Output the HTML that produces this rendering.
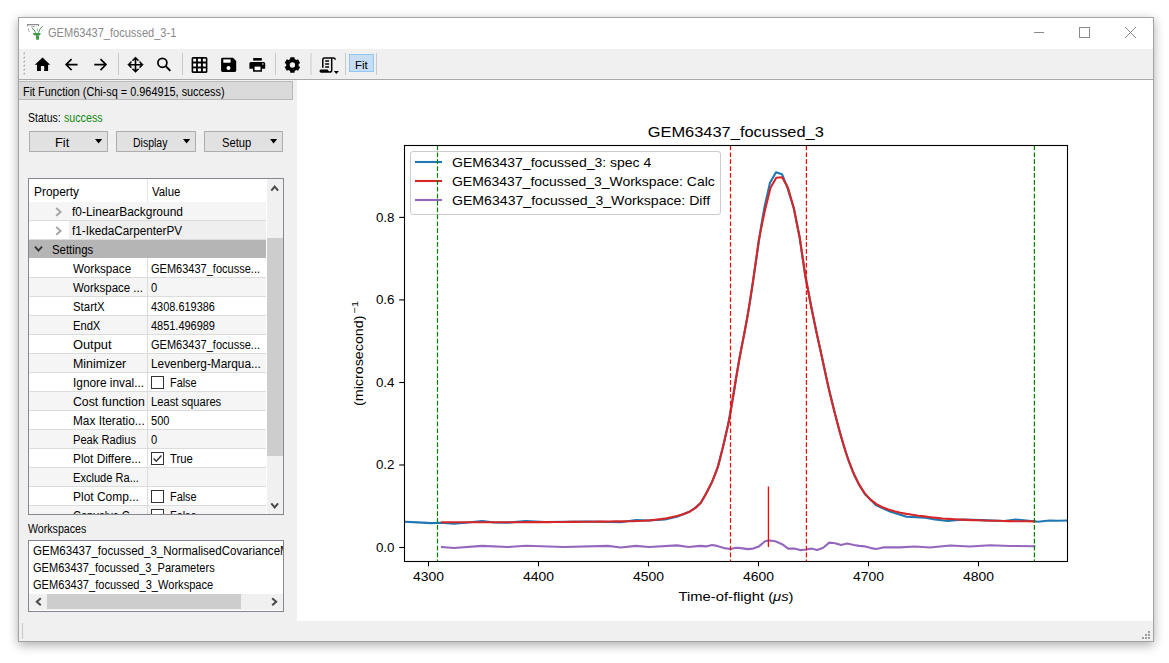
<!DOCTYPE html>
<html><head><meta charset="utf-8">
<style>
*{box-sizing:border-box;margin:0;padding:0}
html,body{width:1169px;height:663px;overflow:hidden;background:#fff;font-family:"Liberation Sans",sans-serif;font-size:12px;color:#000}
.a{position:absolute}
#win{left:18px;top:17px;width:1136px;height:625px;border:1px solid #a3a3a3;background:#f0f0f0;box-shadow:0 3px 10px rgba(0,0,0,0.33)}
.t{position:absolute;white-space:nowrap;line-height:1}
</style></head><body>
<div id="win" class="a"></div>
<!-- title bar -->
<div class="a" style="left:19px;top:18px;width:1134px;height:31px;background:#fff"></div>
<svg class="a" style="left:25px;top:22px" width="20" height="20" viewBox="25 22 20 20">
<path d="M27.6 26.2 V24.6 H38.6 V26.2" fill="none" stroke="#8c8c8c" stroke-width="1.1"/>
<path d="M31.2 26.7 H34.6" stroke="#8c8c8c" stroke-width="0.9"/>
<path d="M29.2 26.7 V27.1 M36.4 26.7 V27.1" stroke="#9a9a9a" stroke-width="0.8"/>
<path d="M28.6 28.4 V30.6 Q28.6 31.6 29.6 31.6" fill="none" stroke="#a8a8a8" stroke-width="1.0"/>
<path d="M37.3 28.2 V31.2" stroke="#b0b0b0" stroke-width="0.9"/>
<path d="M31.8 28.4 Q34.5 28.8 35.6 32.8" fill="none" stroke="#3d9b4a" stroke-width="1.0"/>
<path d="M38.4 32.8 Q39.6 28 42.8 26.2" fill="none" stroke="#3d9b4a" stroke-width="1.0"/>
<path d="M33.1 33 H40.7 Q40.7 35.8 37.4 35.8 H36.6 Q33.1 35.8 33.1 33 Z" fill="#3d9b4a"/>
<path d="M36 35.5 H39.1 L38.9 39.8 H36.2 Z" fill="#3d9b4a"/>
</svg>
<div class="t" style="left:48px;top:27px;font-size:12px;transform:scaleX(0.92);transform-origin:0 0;color:#8a8a8a">GEM63437_focussed_3-1</div>
<div class="a" style="left:1034px;top:32px;width:10px;height:1px;background:#8a8a8a"></div>
<div class="a" style="left:1079px;top:27px;width:11px;height:11px;border:1px solid #8a8a8a"></div>
<svg class="a" style="left:1124px;top:26px" width="13" height="13" viewBox="0 0 13 13"><path d="M1 1 L12 12 M12 1 L1 12" stroke="#8a8a8a" stroke-width="1"/></svg>

<!-- toolbar -->
<div class="a" style="left:19px;top:49px;width:1134px;height:30px;background:#f0f0f0"></div>
<div class="a" style="left:19px;top:79px;width:1134px;height:1px;background:#a9a9a9"></div>
<svg class="a" style="left:0;top:0" width="400" height="80" viewBox="0 0 400 80">
<g><rect x="22.6" y="52.0" width="1.4" height="1.4" fill="#fff"/><rect x="23.4" y="52.6" width="1.6" height="1.6" fill="#a8a8a8"/><rect x="22.6" y="56.1" width="1.4" height="1.4" fill="#fff"/><rect x="23.4" y="56.7" width="1.6" height="1.6" fill="#a8a8a8"/><rect x="22.6" y="60.1" width="1.4" height="1.4" fill="#fff"/><rect x="23.4" y="60.7" width="1.6" height="1.6" fill="#a8a8a8"/><rect x="22.6" y="64.1" width="1.4" height="1.4" fill="#fff"/><rect x="23.4" y="64.7" width="1.6" height="1.6" fill="#a8a8a8"/><rect x="22.6" y="68.2" width="1.4" height="1.4" fill="#fff"/><rect x="23.4" y="68.8" width="1.6" height="1.6" fill="#a8a8a8"/><rect x="22.6" y="72.2" width="1.4" height="1.4" fill="#fff"/><rect x="23.4" y="72.8" width="1.6" height="1.6" fill="#a8a8a8"/></g>
<path d="M34.8 64.8 L42.5 57.6 L50.2 64.8 L48.1 64.8 L48.1 70.9 L44.2 70.9 L44.2 65.9 L40.9 65.9 L40.9 70.9 L37.0 70.9 L37.0 64.8 Z" fill="#000"/>
<path d="M66.2 64.6 H77.6 M71.6 59.1 L66.1 64.6 L71.6 70.1" fill="none" stroke="#000" stroke-width="1.6"/>
<path d="M94.3 64.6 H106 M100.5 59.1 L106 64.6 L100.5 70.1" fill="none" stroke="#000" stroke-width="1.6"/>
<rect x="118" y="53" width="1" height="22" fill="#c9c9c9"/>
<path d="M129 64.7 H142 M135.5 58.2 V71.2" stroke="#000" stroke-width="1.6"/>
<path d="M135.5 57 L138.9 60.4 L137.3 60.4 L135.5 58.7 L133.7 60.4 L132.1 60.4 Z M135.5 72.4 L138.9 69 L137.3 69 L135.5 70.7 L133.7 69 L132.1 69 Z M127.8 64.7 L131.2 61.3 L131.2 62.9 L129.5 64.7 L131.2 66.5 L131.2 68.1 Z M143.2 64.7 L139.8 61.3 L139.8 62.9 L141.5 64.7 L139.8 66.5 L139.8 68.1 Z" fill="#000" stroke="#000" stroke-width="0.6" stroke-linejoin="round"/>
<circle cx="162.4" cy="62.8" r="4.5" fill="none" stroke="#000" stroke-width="1.7"/>
<path d="M165.6 66 L170.4 70.8" stroke="#000" stroke-width="1.9"/>
<rect x="182" y="53" width="1" height="22" fill="#c9c9c9"/>
<rect x="191.6" y="57" width="15.8" height="16" rx="1.5" fill="#000"/>
<g fill="#fff"><rect x="193.2" y="58.7" width="2.9" height="2.8"/><rect x="197.9" y="58.7" width="3" height="2.8"/><rect x="202.9" y="58.7" width="2.9" height="2.8"/><rect x="193.2" y="63.5" width="2.9" height="3"/><rect x="197.9" y="63.5" width="3" height="3"/><rect x="202.9" y="63.5" width="2.9" height="3"/><rect x="193.2" y="68.4" width="2.9" height="2.9"/><rect x="197.9" y="68.4" width="3" height="2.9"/><rect x="202.9" y="68.4" width="2.9" height="2.9"/></g>
<path d="M222.5 57.8 H233 L236.2 61 V70.5 Q236.2 71.9 234.8 71.9 H222.5 Q221.1 71.9 221.1 70.5 V59.2 Q221.1 57.8 222.5 57.8 Z" fill="#000"/>
<rect x="223.3" y="59.4" width="7.3" height="3.3" fill="#fff"/>
<circle cx="228.5" cy="68" r="2" fill="#fff"/>
<rect x="253.2" y="58" width="8.6" height="2.6" fill="#000"/>
<path d="M251 62 H263.6 Q265.2 62 265.2 63.6 V68.8 H262 V71.8 H253 V68.8 H249.4 V63.6 Q249.4 62 251 62 Z" fill="#000"/>
<rect x="254.6" y="66.6" width="5.9" height="3.6" fill="#fff"/>
<rect x="262.2" y="63.3" width="1.3" height="1.3" fill="#fff"/>
<rect x="275" y="53" width="1" height="22" fill="#c9c9c9"/>
<g transform="translate(292.4 65)"><path d="M-2.26 -5.88 L-2.14 -7.71 L2.14 -7.71 L2.26 -5.88 L3.96 -4.90 L5.61 -5.71 L7.75 -2.00 L6.22 -0.99 L6.22 0.99 L7.75 2.00 L5.61 5.71 L3.96 4.90 L2.26 5.88 L2.14 7.71 L-2.14 7.71 L-2.26 5.88 L-3.96 4.90 L-5.61 5.71 L-7.75 2.00 L-6.22 0.99 L-6.22 -0.99 L-7.75 -2.00 L-5.61 -5.71 L-3.96 -4.90 Z" fill="#000"/><circle r="2.7" fill="#f0f0f0"/></g>
<rect x="310.5" y="53" width="1" height="22" fill="#c9c9c9"/>
<path d="M322.8 67.8 V59.6 Q322.8 57.9 324.5 57.9 H333.6 Q335.2 57.9 335.2 59.8" fill="none" stroke="#000" stroke-width="1.5"/>
<path d="M331.7 58.6 V70.2 Q331.7 72.1 329.6 72.1" fill="none" stroke="#000" stroke-width="1.5"/>
<path d="M325.2 61 H329.1 M325.2 64 H329.1 M325.2 67 H329.1" stroke="#000" stroke-width="1.5"/>
<path d="M320.9 69.5 H327.7 Q328 71.1 329.7 71.2 L329.8 72.7 H321 Q319.5 72.7 319.5 71.1 Q319.5 69.5 320.9 69.5 Z" fill="#000"/>
<path d="M333.8 70.9 H338.9 L336.35 73.9 Z" fill="#000"/>
<rect x="345" y="53" width="1" height="22" fill="#c9c9c9"/>
<rect x="349.5" y="54.5" width="24" height="17" fill="#c6ddf3" stroke="#92c7f4" stroke-width="1"/>
<rect x="376" y="53" width="1" height="22" fill="#c9c9c9"/>
</svg>
<div class="t" style="left:355px;top:60px;font-size:11.5px">Fit</div>

<!-- left panel -->
<div class="a" style="left:19px;top:80px;width:278px;height:541px;background:#f0f0f0"></div>
<div class="a" style="left:19px;top:81px;width:274px;height:19px;background:#dadada;border:1px solid #b9b9b9;border-left:none"></div>
<div class="t" style="left:23px;top:86.00px;font-size:12px;transform:scaleX(0.906);transform-origin:0 0;">Fit Function (Chi-sq = 0.964915, success)</div>
<div class="t" style="left:27.7px;top:112.10px;font-size:12px;transform:scaleX(0.873);transform-origin:0 0;">Status: </div>
<div class="t" style="left:63.5px;top:112.10px;font-size:12px;transform:scaleX(0.890);transform-origin:0 0;color:#0e8a0e;">success</div>
<div class="a" style="left:29px;top:131px;width:79px;height:21px;background:#e1e1e1;border:1px solid #adadad"></div>
<div class="t" style="left:54.7px;top:136.70px;font-size:12px;transform:scaleX(1.065);transform-origin:0 0;">Fit</div>
<svg class="a" style="left:95px;top:138.5px" width="8" height="5" viewBox="0 0 8 5"><path d="M0 0 H7.2 L3.6 4.5 Z" fill="#000"/></svg>
<div class="a" style="left:116px;top:131px;width:80px;height:21px;background:#e1e1e1;border:1px solid #adadad"></div>
<div class="t" style="left:132.5px;top:136.70px;font-size:12px;transform:scaleX(0.874);transform-origin:0 0;">Display</div>
<svg class="a" style="left:183px;top:138.5px" width="8" height="5" viewBox="0 0 8 5"><path d="M0 0 H7.2 L3.6 4.5 Z" fill="#000"/></svg>
<div class="a" style="left:204px;top:131px;width:79px;height:21px;background:#e1e1e1;border:1px solid #adadad"></div>
<div class="t" style="left:222.3px;top:136.70px;font-size:12px;transform:scaleX(0.934);transform-origin:0 0;">Setup</div>
<svg class="a" style="left:270.2px;top:138.5px" width="8" height="5" viewBox="0 0 8 5"><path d="M0 0 H7.2 L3.6 4.5 Z" fill="#000"/></svg>
<div class="a" style="left:28px;top:178px;width:256px;height:337px;background:#fff;border:1px solid #828790"></div>
<div class="t" style="left:33.6px;top:185.60px;font-size:12px;transform:scaleX(0.992);transform-origin:0 0;">Property</div>
<div class="t" style="left:152px;top:185.60px;font-size:12px;transform:scaleX(0.950);transform-origin:0 0;">Value</div>
<div class="a" style="left:147px;top:179px;width:1px;height:23px;background:#e5e5e5"></div>
<div class="a" style="left:29px;top:202px;width:237px;height:18px;background:#f5f5f5"></div><div class="a" style="left:29px;top:220px;width:237px;height:1px;background:#dcdcdc"></div>
<svg class="a" style="left:55px;top:207px" width="8" height="10" viewBox="0 0 8 10"><path d="M1.2 1 L5.6 4.9 L1.2 8.8" fill="none" stroke="#a4a4a4" stroke-width="1.9"/></svg>
<div class="t" style="left:72px;top:206.40px;font-size:12px;transform:scaleX(0.996);transform-origin:0 0;">f0-LinearBackground</div>
<div class="a" style="left:29px;top:221px;width:237px;height:18px;background:#fff"></div>
<div class="a" style="left:69px;top:221px;width:197px;height:18px;background:#efefef"></div>
<svg class="a" style="left:55px;top:226px" width="8" height="10" viewBox="0 0 8 10"><path d="M1.2 1 L5.6 4.9 L1.2 8.8" fill="none" stroke="#a4a4a4" stroke-width="1.9"/></svg>
<div class="t" style="left:72px;top:225.40px;font-size:12px;transform:scaleX(0.976);transform-origin:0 0;">f1-IkedaCarpenterPV</div>
<div class="a" style="left:29px;top:239px;width:237px;height:1px;background:#dcdcdc"></div><div class="a" style="left:29px;top:240px;width:237px;height:18px;background:#b5b5b5"></div>
<svg class="a" style="left:34px;top:245px" width="10" height="8" viewBox="0 0 10 8"><path d="M1 1.6 L4.5 5.6 L8 1.6" fill="none" stroke="#333" stroke-width="1.8"/></svg>
<div class="t" style="left:52px;top:244.40px;font-size:12px;transform:scaleX(0.950);transform-origin:0 0;">Settings</div>
<div class="a" style="left:29px;top:258px;width:237px;height:19px;background:#fff"></div>
<div class="a" style="left:147px;top:258px;width:1px;height:19px;background:#dcdcdc"></div>
<div class="t" style="left:72.5px;top:263.30px;font-size:12px;transform:scaleX(0.972);transform-origin:0 0;">Workspace</div>
<div class="t" style="left:151.3px;top:263.30px;font-size:12px;transform:scaleX(0.918);transform-origin:0 0;">GEM63437_focusse...</div>
<div class="a" style="left:29px;top:277px;width:237px;height:19px;background:#f5f5f5"></div>
<div class="a" style="left:147px;top:277px;width:1px;height:19px;background:#dcdcdc"></div>
<div class="t" style="left:72.5px;top:282.30px;font-size:12px;transform:scaleX(0.956);transform-origin:0 0;">Workspace ...</div>
<div class="t" style="left:151.3px;top:282.30px;font-size:12px;transform:scaleX(0.930);transform-origin:0 0;">0</div>
<div class="a" style="left:29px;top:296px;width:237px;height:19px;background:#fff"></div>
<div class="a" style="left:147px;top:296px;width:1px;height:19px;background:#dcdcdc"></div>
<div class="t" style="left:72.5px;top:301.30px;font-size:12px;transform:scaleX(0.951);transform-origin:0 0;">StartX</div>
<div class="t" style="left:151.3px;top:301.30px;font-size:12px;transform:scaleX(0.912);transform-origin:0 0;">4308.619386</div>
<div class="a" style="left:29px;top:315px;width:237px;height:19px;background:#f5f5f5"></div>
<div class="a" style="left:147px;top:315px;width:1px;height:19px;background:#dcdcdc"></div>
<div class="t" style="left:72.5px;top:320.30px;font-size:12px;transform:scaleX(0.930);transform-origin:0 0;">EndX</div>
<div class="t" style="left:151.3px;top:320.30px;font-size:12px;transform:scaleX(0.912);transform-origin:0 0;">4851.496989</div>
<div class="a" style="left:29px;top:334px;width:237px;height:19px;background:#fff"></div>
<div class="a" style="left:147px;top:334px;width:1px;height:19px;background:#dcdcdc"></div>
<div class="t" style="left:72.5px;top:339.30px;font-size:12px;transform:scaleX(1.069);transform-origin:0 0;">Output</div>
<div class="t" style="left:151.3px;top:339.30px;font-size:12px;transform:scaleX(0.918);transform-origin:0 0;">GEM63437_focusse...</div>
<div class="a" style="left:29px;top:353px;width:237px;height:19px;background:#f5f5f5"></div>
<div class="a" style="left:147px;top:353px;width:1px;height:19px;background:#dcdcdc"></div>
<div class="t" style="left:72.5px;top:358.30px;font-size:12px;transform:scaleX(1.036);transform-origin:0 0;">Minimizer</div>
<div class="t" style="left:151.3px;top:358.30px;font-size:12px;transform:scaleX(0.986);transform-origin:0 0;">Levenberg-Marqua...</div>
<div class="a" style="left:29px;top:372px;width:237px;height:19px;background:#fff"></div>
<div class="a" style="left:147px;top:372px;width:1px;height:19px;background:#dcdcdc"></div>
<div class="t" style="left:72.5px;top:377.30px;font-size:12px;transform:scaleX(0.987);transform-origin:0 0;">Ignore inval...</div>
<div class="a" style="left:151px;top:376px;width:13px;height:13px;border:1px solid #333;background:#fff"></div>
<div class="t" style="left:170.4px;top:377.30px;font-size:12px;transform:scaleX(0.906);transform-origin:0 0;">False</div>
<div class="a" style="left:29px;top:391px;width:237px;height:19px;background:#f5f5f5"></div>
<div class="a" style="left:147px;top:391px;width:1px;height:19px;background:#dcdcdc"></div>
<div class="t" style="left:72.5px;top:396.30px;font-size:12px;transform:scaleX(1.024);transform-origin:0 0;">Cost function</div>
<div class="t" style="left:151.3px;top:396.30px;font-size:12px;transform:scaleX(0.931);transform-origin:0 0;">Least squares</div>
<div class="a" style="left:29px;top:410px;width:237px;height:19px;background:#fff"></div>
<div class="a" style="left:147px;top:410px;width:1px;height:19px;background:#dcdcdc"></div>
<div class="t" style="left:72.5px;top:415.30px;font-size:12px;transform:scaleX(0.986);transform-origin:0 0;">Max Iteratio...</div>
<div class="t" style="left:151.3px;top:415.30px;font-size:12px;transform:scaleX(0.924);transform-origin:0 0;">500</div>
<div class="a" style="left:29px;top:429px;width:237px;height:19px;background:#f5f5f5"></div>
<div class="a" style="left:147px;top:429px;width:1px;height:19px;background:#dcdcdc"></div>
<div class="t" style="left:72.5px;top:434.30px;font-size:12px;transform:scaleX(0.927);transform-origin:0 0;">Peak Radius</div>
<div class="t" style="left:151.3px;top:434.30px;font-size:12px;transform:scaleX(0.930);transform-origin:0 0;">0</div>
<div class="a" style="left:29px;top:448px;width:237px;height:19px;background:#fff"></div>
<div class="a" style="left:147px;top:448px;width:1px;height:19px;background:#dcdcdc"></div>
<div class="t" style="left:72.5px;top:453.30px;font-size:12px;transform:scaleX(0.984);transform-origin:0 0;">Plot Differe...</div>
<div class="a" style="left:151px;top:452px;width:13px;height:13px;border:1px solid #333;background:#fff"></div>
<svg class="a" style="left:152px;top:453px" width="11" height="11" viewBox="0 0 11 11"><path d="M1.6 5.6 L4.3 8.2 L9.4 2.6" fill="none" stroke="#333" stroke-width="1.45"/></svg>
<div class="t" style="left:170.4px;top:453.30px;font-size:12px;transform:scaleX(0.941);transform-origin:0 0;">True</div>
<div class="a" style="left:29px;top:467px;width:237px;height:19px;background:#f5f5f5"></div>
<div class="a" style="left:147px;top:467px;width:1px;height:19px;background:#dcdcdc"></div>
<div class="t" style="left:72.5px;top:472.30px;font-size:12px;transform:scaleX(0.923);transform-origin:0 0;">Exclude Ra...</div>
<div class="a" style="left:29px;top:486px;width:237px;height:19px;background:#fff"></div>
<div class="a" style="left:147px;top:486px;width:1px;height:19px;background:#dcdcdc"></div>
<div class="t" style="left:72.5px;top:491.30px;font-size:12px;transform:scaleX(0.998);transform-origin:0 0;">Plot Comp...</div>
<div class="a" style="left:151px;top:490px;width:13px;height:13px;border:1px solid #333;background:#fff"></div>
<div class="t" style="left:170.4px;top:491.30px;font-size:12px;transform:scaleX(0.906);transform-origin:0 0;">False</div>
<div class="a" style="left:29px;top:505px;width:237px;height:19px;background:#f5f5f5"></div>
<div class="a" style="left:147px;top:505px;width:1px;height:19px;background:#dcdcdc"></div>
<div class="t" style="left:72.5px;top:510.30px;font-size:12px;transform:scaleX(0.915);transform-origin:0 0;">Convolve C...</div>
<div class="a" style="left:151px;top:509px;width:13px;height:13px;border:1px solid #333;background:#fff"></div>
<div class="t" style="left:170.4px;top:510.30px;font-size:12px;transform:scaleX(0.906);transform-origin:0 0;">False</div>
<div class="a" style="left:29px;top:277px;width:237px;height:1px;background:#dcdcdc"></div>
<div class="a" style="left:29px;top:296px;width:237px;height:1px;background:#dcdcdc"></div>
<div class="a" style="left:29px;top:315px;width:237px;height:1px;background:#dcdcdc"></div>
<div class="a" style="left:29px;top:334px;width:237px;height:1px;background:#dcdcdc"></div>
<div class="a" style="left:29px;top:353px;width:237px;height:1px;background:#dcdcdc"></div>
<div class="a" style="left:29px;top:372px;width:237px;height:1px;background:#dcdcdc"></div>
<div class="a" style="left:29px;top:391px;width:237px;height:1px;background:#dcdcdc"></div>
<div class="a" style="left:29px;top:410px;width:237px;height:1px;background:#dcdcdc"></div>
<div class="a" style="left:29px;top:429px;width:237px;height:1px;background:#dcdcdc"></div>
<div class="a" style="left:29px;top:448px;width:237px;height:1px;background:#dcdcdc"></div>
<div class="a" style="left:29px;top:467px;width:237px;height:1px;background:#dcdcdc"></div>
<div class="a" style="left:29px;top:486px;width:237px;height:1px;background:#dcdcdc"></div>
<div class="a" style="left:29px;top:505px;width:237px;height:1px;background:#dcdcdc"></div>
<div class="a" style="left:29px;top:524px;width:237px;height:1px;background:#dcdcdc"></div>
<div class="a" style="left:28px;top:515px;width:256px;height:14px;background:#f0f0f0"></div>
<div class="a" style="left:28px;top:514px;width:256px;height:1px;background:#828790"></div>
<div class="a" style="left:266px;top:179px;width:1px;height:335px;background:#fff"></div>
<div class="a" style="left:267px;top:179px;width:16px;height:335px;background:#f0f0f0"></div>
<div class="a" style="left:267px;top:238px;width:16px;height:218px;background:#cdcdcd"></div>
<svg class="a" style="left:270px;top:184px" width="10" height="8" viewBox="0 0 10 8"><path d="M1.3 6.6 L4.7 2.6 L8.1 6.6" fill="none" stroke="#4a4a4a" stroke-width="2"/></svg>
<svg class="a" style="left:270px;top:502px" width="10" height="8" viewBox="0 0 10 8"><path d="M1.3 1.4 L4.7 5.4 L8.1 1.4" fill="none" stroke="#4a4a4a" stroke-width="2"/></svg>
<div class="t" style="left:27.7px;top:522.80px;font-size:12px;transform:scaleX(0.885);transform-origin:0 0;">Workspaces</div>
<div class="a" style="left:28px;top:540px;width:256px;height:72px;background:#fff;border:1px solid #828790;overflow:hidden">
<div class="t" style="top:3.80px;left:4.4px;font-size:12px;transform:scaleX(0.962);transform-origin:0 0">GEM63437_focussed_3_NormalisedCovarianceMatrix</div>
<div class="t" style="top:20.80px;left:4.4px;font-size:12px;transform:scaleX(0.92);transform-origin:0 0">GEM63437_focussed_3_Parameters</div>
<div class="t" style="top:37.80px;left:4.4px;font-size:12px;transform:scaleX(0.923);transform-origin:0 0">GEM63437_focussed_3_Workspace</div>
<div class="a" style="left:0;top:53px;width:254px;height:16px;background:#f0f0f0"></div>
<div class="a" style="left:18px;top:53px;width:194px;height:15px;background:#cdcdcd"></div>
<svg class="a" style="left:6px;top:56px" width="7" height="10" viewBox="0 0 7 10"><path d="M5.8 1.3 L1.8 4.8 L5.8 8.3" fill="none" stroke="#4a4a4a" stroke-width="2"/></svg>
<svg class="a" style="left:242px;top:56px" width="7" height="10" viewBox="0 0 7 10"><path d="M1.2 1.3 L5.2 4.8 L1.2 8.3" fill="none" stroke="#4a4a4a" stroke-width="2"/></svg>
</div>
<!-- plot canvas -->
<div class="a" style="left:297px;top:80px;width:856px;height:541px;background:#fff"></div>
<svg class="a" style="left:297px;top:80px" width="856" height="541" viewBox="297 80 856 541">
<defs><clipPath id="ax"><rect x="404.5" y="145.5" width="663" height="416"/></clipPath></defs>
<g clip-path="url(#ax)">
<path d="M405.0,521.8 L418.0,522.4 L430.8,523.1 L441.0,522.8 L453.9,523.6 L468.0,522.5 L482.0,521.0 L495.0,522.5 L507.8,522.6 L525.7,521.0 L545.0,522.0 L564.0,521.8 L590.0,521.5 L620.7,522.3 L636.0,520.0 L649.0,520.5 L665.0,519.5 L677.0,516.7 L690.0,511.5 L695.0,508.1 L700.5,503.3 L706.0,493.7 L711.5,483.2 L717.0,469.7 L722.5,448.8 L728.0,425.2 L733.5,395.0 L739.0,360.1 L744.5,332.6 L750.0,301.7 L755.5,264.5 L761.0,226.9 L764.5,207.0 L770.0,182.7 L776.0,172.2 L782.0,174.2 L787.2,187.2 L794.0,208.9 L799.5,236.7 L805.0,274.2 L810.5,302.8 L816.0,330.2 L821.5,355.0 L827.0,380.8 L832.5,403.8 L838.0,425.6 L843.5,445.0 L849.0,461.8 L854.5,475.8 L860.0,486.5 L865.5,494.8 L876.3,505.4 L890.0,511.5 L906.5,516.7 L925.3,517.6 L935.0,519.5 L947.9,521.0 L962.9,519.5 L981.7,520.1 L1004.3,521.0 L1015.6,519.5 L1034.0,521.2 L1038.2,521.8 L1049.5,520.5 L1058.0,520.8 L1067.0,520.5" fill="none" stroke="#1f77b4" stroke-width="2.1" stroke-linejoin="round" stroke-linecap="square"/>
<path d="M442.0,522.3 L443.4,522.3 L448.8,522.3 L454.3,522.3 L459.8,522.3 L465.2,522.3 L470.7,522.3 L476.2,522.3 L481.7,522.2 L487.2,522.2 L492.7,522.2 L498.2,522.2 L503.8,522.2 L509.3,522.2 L514.8,522.2 L520.4,522.2 L525.9,522.1 L531.4,522.1 L537.0,522.1 L542.6,522.1 L548.1,522.1 L553.7,522.0 L559.3,522.0 L564.9,522.0 L570.5,521.9 L576.1,521.9 L581.7,521.8 L587.3,521.8 L592.9,521.7 L598.6,521.6 L604.2,521.6 L609.8,521.5 L615.5,521.4 L621.1,521.4 L626.8,521.3 L632.5,521.2 L638.1,521.0 L643.8,520.8 L649.5,520.4 L655.2,519.8 L660.9,519.1 L666.6,518.2 L672.3,517.1 L678.0,515.7 L683.8,514.0 L689.5,511.7 L695.2,508.2 L701.0,502.5 L706.7,492.5 L712.5,480.9 L718.3,465.7 L724.0,442.8 L729.8,416.9 L735.6,380.5 L741.4,348.2 L747.2,318.3 L753.0,281.5 L758.8,240.0 L764.6,211.7 L770.5,187.8 L776.3,177.7 L782.1,177.3 L788.0,187.8 L793.8,208.3 L799.7,237.7 L805.6,277.3 L811.4,308.0 L817.3,335.9 L823.2,363.0 L829.1,390.4 L835.0,414.0 L840.9,435.9 L846.8,455.5 L852.7,471.2 L858.7,483.9 L864.6,493.1 L870.5,499.6 L876.5,504.2 L882.4,507.2 L888.4,509.5 L894.4,511.3 L900.3,512.7 L906.3,513.9 L912.3,514.8 L918.3,515.7 L924.3,516.4 L930.3,517.2 L936.3,517.9 L942.4,518.5 L948.4,518.9 L954.4,519.3 L960.5,519.6 L966.5,519.9 L972.6,520.1 L978.7,520.3 L984.7,520.5 L990.8,520.7 L996.9,520.8 L1003.0,521.0 L1009.1,521.1 L1015.2,521.2 L1021.3,521.3 L1027.4,521.3 L1033.6,521.4 L1034.4,521.4" fill="none" stroke="#d62728" stroke-width="2.1" stroke-linejoin="round" stroke-linecap="square"/>
<path d="M442.0,547.0 L453.9,548.0 L482.0,545.9 L507.8,547.0 L525.7,545.7 L564.0,547.0 L607.9,545.9 L620.7,547.5 L636.0,545.9 L649.0,547.0 L677.0,545.4 L688.7,547.0 L700.0,545.9 L706.0,546.4 L712.0,545.0 L717.1,545.9 L724.0,548.1 L730.5,549.0 L735.9,547.8 L741.0,548.1 L747.9,549.1 L753.0,548.6 L759.0,546.4 L765.0,541.3 L768.4,540.4 L775.3,541.3 L782.1,544.2 L788.1,548.6 L794.1,548.6 L800.1,550.1 L806.1,549.5 L811.2,548.6 L817.2,550.1 L823.2,547.8 L829.2,542.6 L835.2,543.3 L841.1,545.0 L847.1,543.5 L854.0,545.0 L859.1,545.9 L865.1,546.4 L871.1,548.1 L876.2,549.0 L883.1,547.4 L900.0,547.4 L915.0,546.5 L930.0,547.5 L950.0,545.5 L970.0,546.5 L990.0,545.2 L1010.0,546.0 L1034.4,546.2" fill="none" stroke="#9467bd" stroke-width="2.1" stroke-linejoin="round" stroke-linecap="square"/>
</g>
<rect x="410.5" y="151.5" width="310" height="63" rx="2.5" fill="#fff" fill-opacity="0.8" stroke="#cccccc" stroke-width="1"/>
<path d="M415 162 H442" stroke="#1f77b4" stroke-width="2.1"/>
<text x="452" y="167" font-family="Liberation Sans" font-size="12.6" textLength="199.3" lengthAdjust="spacingAndGlyphs">GEM63437_focussed_3: spec 4</text>
<path d="M415 181 H442" stroke="#d62728" stroke-width="2.1"/>
<text x="452" y="186" font-family="Liberation Sans" font-size="12.6" textLength="262.8" lengthAdjust="spacingAndGlyphs">GEM63437_focussed_3_Workspace: Calc</text>
<path d="M415 200 H442" stroke="#9467bd" stroke-width="2.1"/>
<text x="452" y="205" font-family="Liberation Sans" font-size="12.6" textLength="258.1" lengthAdjust="spacingAndGlyphs">GEM63437_focussed_3_Workspace: Diff</text>
<g clip-path="url(#ax)" stroke-width="1.2" stroke-dasharray="4.7 2.2">
<path d="M437.5 145.5 V561.5" stroke="#008000"/>
<path d="M1034.4 145.5 V561.5" stroke="#008000"/>
<path d="M730.5 145.5 V561.5" stroke="#ff0000"/>
<path d="M806.4 145.5 V561.5" stroke="#ff0000"/>
</g>
<path d="M768.4 486.5 V547" stroke="#ff0000" stroke-width="1.3"/>
<rect x="404.5" y="145.5" width="663" height="416" fill="none" stroke="#000" stroke-width="1.1"/>
<path d="M428.5 561.5 V566.4" stroke="#000" stroke-width="1.1"/>
<text x="428.5" y="580.8" font-family="Liberation Sans" font-size="12.2" text-anchor="middle" textLength="31" lengthAdjust="spacingAndGlyphs">4300</text>
<path d="M538.5 561.5 V566.4" stroke="#000" stroke-width="1.1"/>
<text x="538.5" y="580.8" font-family="Liberation Sans" font-size="12.2" text-anchor="middle" textLength="31" lengthAdjust="spacingAndGlyphs">4400</text>
<path d="M648.5 561.5 V566.4" stroke="#000" stroke-width="1.1"/>
<text x="648.5" y="580.8" font-family="Liberation Sans" font-size="12.2" text-anchor="middle" textLength="31" lengthAdjust="spacingAndGlyphs">4500</text>
<path d="M758.5 561.5 V566.4" stroke="#000" stroke-width="1.1"/>
<text x="758.5" y="580.8" font-family="Liberation Sans" font-size="12.2" text-anchor="middle" textLength="31" lengthAdjust="spacingAndGlyphs">4600</text>
<path d="M868.5 561.5 V566.4" stroke="#000" stroke-width="1.1"/>
<text x="868.5" y="580.8" font-family="Liberation Sans" font-size="12.2" text-anchor="middle" textLength="31" lengthAdjust="spacingAndGlyphs">4700</text>
<path d="M978.5 561.5 V566.4" stroke="#000" stroke-width="1.1"/>
<text x="978.5" y="580.8" font-family="Liberation Sans" font-size="12.2" text-anchor="middle" textLength="31" lengthAdjust="spacingAndGlyphs">4800</text>
<path d="M399.2 547.5 H404.5" stroke="#000" stroke-width="1.1"/>
<text x="394.5" y="551.9" font-family="Liberation Sans" font-size="12.2" text-anchor="end" textLength="18.6" lengthAdjust="spacingAndGlyphs">0.0</text>
<path d="M399.2 465.0 H404.5" stroke="#000" stroke-width="1.1"/>
<text x="394.5" y="469.4" font-family="Liberation Sans" font-size="12.2" text-anchor="end" textLength="18.6" lengthAdjust="spacingAndGlyphs">0.2</text>
<path d="M399.2 382.5 H404.5" stroke="#000" stroke-width="1.1"/>
<text x="394.5" y="386.9" font-family="Liberation Sans" font-size="12.2" text-anchor="end" textLength="18.6" lengthAdjust="spacingAndGlyphs">0.4</text>
<path d="M399.2 299.9 H404.5" stroke="#000" stroke-width="1.1"/>
<text x="394.5" y="304.3" font-family="Liberation Sans" font-size="12.2" text-anchor="end" textLength="18.6" lengthAdjust="spacingAndGlyphs">0.6</text>
<path d="M399.2 217.4 H404.5" stroke="#000" stroke-width="1.1"/>
<text x="394.5" y="221.8" font-family="Liberation Sans" font-size="12.2" text-anchor="end" textLength="18.6" lengthAdjust="spacingAndGlyphs">0.8</text>
<text x="647.7" y="136.5" font-family="Liberation Sans" font-size="15" textLength="176.2" lengthAdjust="spacingAndGlyphs">GEM63437_focussed_3</text>
<text x="678.5" y="600.8" font-family="Liberation Sans" font-size="12.4" textLength="115" lengthAdjust="spacingAndGlyphs">Time-of-flight (<tspan font-style="italic">μs</tspan>)</text>
<text transform="translate(363.3 406) rotate(-90)" font-family="Liberation Sans" font-size="12.4"><tspan x="0" y="0" textLength="90.5" lengthAdjust="spacingAndGlyphs">(microsecond)</tspan><tspan x="92.5" y="-5.3" font-size="9.4" textLength="12.5" lengthAdjust="spacingAndGlyphs">−1</tspan></text>
</svg>
<!-- status bar -->
<div class="a" style="left:19px;top:621px;width:1134px;height:20px;background:#f0f0f0"></div>
<div class="a" style="left:22px;top:623px;width:1px;height:16px;background:#c8c8c8"></div>

<svg class="a" style="left:1140px;top:629px" width="12" height="12" viewBox="0 0 12 12"><g fill="#a0a0a0"><rect x="8" y="2" width="2" height="2"/><rect x="5" y="5" width="2" height="2"/><rect x="8" y="5" width="2" height="2"/><rect x="2" y="8" width="2" height="2"/><rect x="5" y="8" width="2" height="2"/><rect x="8" y="8" width="2" height="2"/></g></svg></body></html>
